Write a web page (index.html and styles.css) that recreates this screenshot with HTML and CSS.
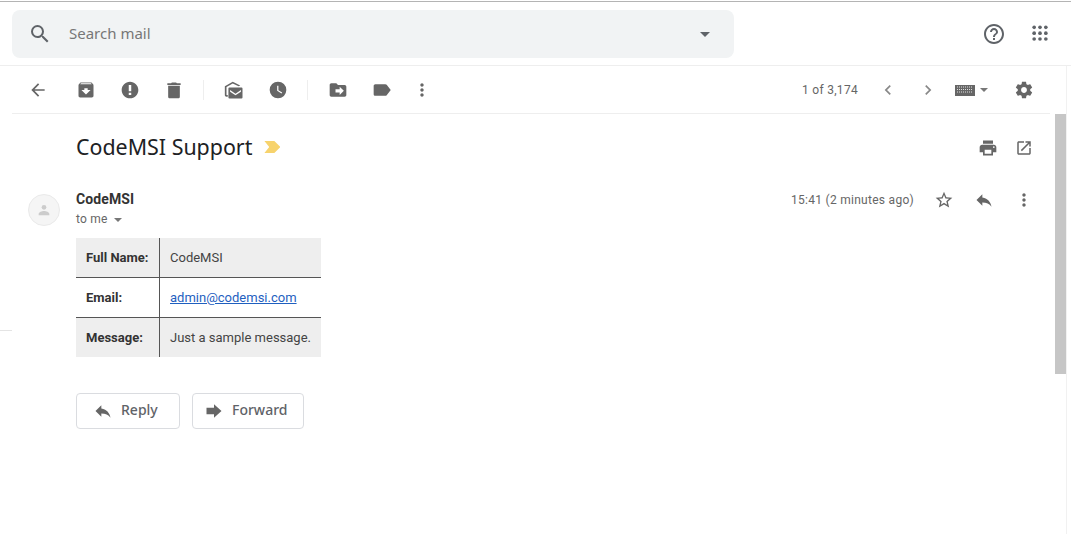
FILE: index.html
```html
<!DOCTYPE html>
<html lang="en">
<head>
<meta charset="utf-8">
<title>CodeMSI Support - Mail</title>
<link rel="stylesheet" href="styles.css">
</head>
<body>
<svg class="sprite" aria-hidden="true">
  <symbol id="i-search" viewBox="0 0 24 24"><path d="M15.5 14h-.79l-.28-.27A6.471 6.471 0 0 0 16 9.5 6.5 6.5 0 1 0 9.5 16c1.61 0 3.09-.59 4.23-1.57l.27.28v.79l5 4.99L20.49 19l-4.99-5zm-6 0C7.01 14 5 11.99 5 9.5S7.01 5 9.5 5 14 7.01 14 9.5 11.99 14 9.5 14z"/></symbol>
  <symbol id="i-help" viewBox="0 0 24 24"><path d="M11 18h2v-2h-2v2zm1-16C6.48 2 2 6.48 2 12s4.48 10 10 10 10-4.48 10-10S17.52 2 12 2zm0 18c-4.41 0-8-3.59-8-8s3.59-8 8-8 8 3.59 8 8-3.59 8-8 8zm0-14c-2.21 0-4 1.79-4 4h2c0-1.1.9-2 2-2s2 .9 2 2c0 2-3 1.75-3 5h2c0-2.25 3-2.5 3-5 0-2.21-1.79-4-4-4z"/></symbol>
  <symbol id="i-apps" viewBox="0 0 24 24"><circle cx="5" cy="4" r="2.200"/><circle cx="12" cy="4" r="2.200"/><circle cx="19" cy="4" r="2.200"/><circle cx="5" cy="11" r="2.200"/><circle cx="12" cy="11" r="2.200"/><circle cx="19" cy="11" r="2.200"/><circle cx="5" cy="18" r="2.200"/><circle cx="12" cy="18" r="2.200"/><circle cx="19" cy="18" r="2.200"/></symbol>
  <symbol id="i-back" viewBox="0 0 24 24"><path d="M20 11H7.83l5.59-5.59L12 4l-8 8 8 8 1.41-1.41L7.83 13H20v-2z"/></symbol>
  <symbol id="i-archive" viewBox="0 0 24 24"><path d="M20.54 5.23l-1.39-1.68C18.88 3.21 18.47 3 18 3H6c-.47 0-.88.21-1.16.55L3.46 5.23C3.17 5.57 3 6.02 3 6.5V19c0 1.1.9 2 2 2h14c1.1 0 2-.9 2-2V6.5c0-.48-.17-.93-.46-1.27zM12 17.5L6.5 12H10v-2h4v2h3.5L12 17.5zM5.12 5l.81-1h12l.94 1H5.12z"/></symbol>
  <symbol id="i-spam" viewBox="0 0 24 24"><path d="M12 2C6.48 2 2 6.48 2 12s4.48 10 10 10 10-4.48 10-10S17.52 2 12 2zm1.5 16h-3v-2.6h3V18zm0-4.6h-3V6h3v7.4z"/></symbol>
  <symbol id="i-delete" viewBox="0 0 24 24"><path d="M5 20c0 1.1.9 2 2 2h10c1.1 0 2-.9 2-2V7H5v13zM20 4h-4.5l-1-1h-5l-1 1H4v2h16V4z"/></symbol>
  <symbol id="i-mark" viewBox="0 0 24 24"><path d="M1 7.500 10.500 2 19.500 6.500 17.500 7.500 10.500 4.200 3 8.500V18H4.500v2H3c-1.200 0-2-.8-2-2z"/><path d="M6.500 9H21c.8 0 1.200.4 1.200 1.200V21c0 .8-.4 1.200-1.200 1.200H6.500c-.8 0-1.200-.4-1.200-1.200V10.200c0-.8.4-1.200 1.200-1.200zm.8 3 6.500 4.400L20.300 12v2L13.800 18.400 7.300 14z" fill-rule="evenodd"/></symbol>
  <symbol id="i-clock" viewBox="0 0 24 24"><path d="M12 2a10 10 0 1 0 0 20 10 10 0 0 0 0-20zm4.200 14.200L11 13V7h1.500v5.200l4.500 2.700z" fill-rule="evenodd"/></symbol>
  <symbol id="i-move" viewBox="0 0 24 24"><path d="M20 6h-8l-2-2H4c-1.100 0-2 .9-2 2v12c0 1.100.9 2 2 2h16c1.100 0 2-.9 2-2V8c0-1.100-.9-2-2-2zm-6 12v-3H9v-4h5V8l5 5-5 5z"/></symbol>
  <symbol id="i-label" viewBox="0 0 24 24"><path d="M17.630 5.840C17.270 5.330 16.670 5 16 5L4 5.010C2.900 5.010 2 5.900 2 7v10c0 1.100.9 1.990 2 1.990L16 19c.67 0 1.270-.33 1.630-.84L22.500 12l-4.870-6.160z"/></symbol>
  <symbol id="i-more" viewBox="0 0 24 24"><path d="M12 8c1.100 0 2-.9 2-2s-.9-2-2-2-2 .9-2 2 .9 2 2 2zm0 2c-1.100 0-2 .9-2 2s.9 2 2 2 2-.9 2-2-.9-2-2-2zm0 6c-1.100 0-2 .9-2 2s.9 2 2 2 2-.9 2-2-.9-2-2-2z"/></symbol>
  <symbol id="i-left" viewBox="0 0 24 24"><path d="M15.410 7.410L14 6l-6 6 6 6 1.410-1.410L10.830 12z"/></symbol>
  <symbol id="i-right" viewBox="0 0 24 24"><path d="M10 6L8.590 7.410 13.170 12l-4.580 4.590L10 18l6-6z"/></symbol>
  <symbol id="i-keyboard" viewBox="0 0 20 12"><path d="M0 1h20v11H0z"/><path d="M2 3h16M2 5.500h16M2 8h16" stroke="#ddd" stroke-width="1" stroke-dasharray="1 1"/></symbol>
  <symbol id="i-gear" viewBox="0 0 24 24"><path d="M19.430 12.980c.04-.32.07-.64.07-.98s-.03-.66-.07-.98l2.110-1.650c.19-.15.24-.42.12-.64l-2-3.460c-.12-.22-.39-.3-.61-.22l-2.490 1c-.52-.4-1.080-.73-1.690-.98l-.38-2.650C14.460 2.180 14.250 2 14 2h-4c-.25 0-.46.18-.49.42l-.38 2.650c-.61.25-1.170.59-1.690.98l-2.490-1c-.23-.09-.49 0-.61.22l-2 3.460c-.13.22-.07.49.12.64l2.110 1.650c-.04.32-.07.65-.07.98s.03.66.07.98l-2.110 1.650c-.19.15-.24.42-.12.64l2 3.460c.12.22.39.3.61.22l2.490-1c.52.4 1.080.73 1.690.98l.38 2.650c.03.24.24.42.49.42h4c.25 0 .46-.18.49-.42l.38-2.650c.61-.25 1.170-.59 1.690-.98l2.490 1c.23.09.49 0 .61-.22l2-3.460c.12-.22.07-.49-.12-.64l-2.110-1.650zM12 15.500c-1.930 0-3.500-1.570-3.500-3.500s1.570-3.500 3.500-3.500 3.500 1.570 3.500 3.500-1.570 3.500-3.500 3.500z"/></symbol>
  <symbol id="i-print" viewBox="0 0 24 24"><path d="M19 8H5c-1.660 0-3 1.340-3 3v6h4v4h12v-4h4v-6c0-1.660-1.340-3-3-3zm-3 11H8v-5h8v5zm3-7c-.55 0-1-.45-1-1s.45-1 1-1 1 .45 1 1-.45 1-1 1zm-1-9H6v4h12V3z"/></symbol>
  <symbol id="i-open" viewBox="0 0 24 24"><path d="M19 19H5V5h7V3H5c-1.110 0-2 .9-2 2v14c0 1.100.89 2 2 2h14c1.100 0 2-.9 2-2v-7h-2v7zM14 3v2h3.590l-9.830 9.830 1.410 1.410L19 6.410V10h2V3h-7z"/></symbol>
  <symbol id="i-star" viewBox="0 0 24 24"><path d="M22 9.240l-7.190-.62L12 2 9.190 8.630 2 9.240l5.460 4.730L5.820 21 12 17.270 18.180 21l-1.630-7.030L22 9.240zM12 15.400l-3.760 2.270 1-4.280-3.320-2.880 4.380-.38L12 6.100l1.710 4.040 4.380.38-3.320 2.880 1 4.280L12 15.400z"/></symbol>
  <symbol id="i-reply" viewBox="0 0 24 24"><path d="M10 9V5l-7 7 7 7v-4.100c5 0 8.500 1.600 11 5.100-1-5-4-10-11-11z"/></symbol>
  <symbol id="i-forward" viewBox="0 0 24 24"><path d="M12 8V4l9 8-9 8v-4H3V8z"/></symbol>
  <symbol id="i-person" viewBox="0 0 24 24"><circle cx="12" cy="8" r="3.500"/><path d="M4 20v-2c0-3 5-4.500 8-4.500s8 1.500 8 4.500v2z"/></symbol>
</svg>

<header class="topbar">
  <div class="search">
    <svg class="icon search-icon"><use href="#i-search"/></svg>
    <span class="search-text">Search mail</span>
    <span class="caret search-caret"></span>
  </div>
  <div class="top-actions">
    <button class="btn btn-44"><svg class="icon icon-24"><use href="#i-help"/></svg></button>
    <button class="btn btn-48"><svg class="icon icon-apps"><use href="#i-apps"/></svg></button>
  </div>
</header>

<div class="frame">
  <nav class="toolbar">
    <button class="btn btn-44 back"><svg class="icon"><use href="#i-back"/></svg></button>
    <button class="btn btn-44"><svg class="icon"><use href="#i-archive"/></svg></button>
    <button class="btn btn-44"><svg class="icon"><use href="#i-spam"/></svg></button>
    <button class="btn btn-44"><svg class="icon"><use href="#i-delete"/></svg></button>
    <span class="divider"></span>
    <button class="btn btn-44"><svg class="icon"><use href="#i-mark"/></svg></button>
    <button class="btn btn-44"><svg class="icon"><use href="#i-clock"/></svg></button>
    <span class="divider"></span>
    <button class="btn btn-44"><svg class="icon"><use href="#i-move"/></svg></button>
    <button class="btn btn-44"><svg class="icon"><use href="#i-label"/></svg></button>
    <button class="btn btn-36"><svg class="icon"><use href="#i-more"/></svg></button>
    <span class="pager">1 of 3,174</span>
    <button class="btn btn-40"><svg class="icon icon-light"><use href="#i-left"/></svg></button>
    <button class="btn btn-40"><svg class="icon icon-light"><use href="#i-right"/></svg></button>
    <div class="kbd">
      <svg class="icon-kbd"><use href="#i-keyboard"/></svg>
      <span class="caret caret-small"></span>
    </div>
    <button class="btn btn-44"><svg class="icon"><use href="#i-gear"/></svg></button>
  </nav>

  <div class="pane">
    <main class="mail">
      <div class="subject-row">
        <h1 class="subject">CodeMSI Support</h1>
        <span class="marker"></span>
        <div class="subject-actions">
          <button class="btn btn-36"><svg class="icon"><use href="#i-print"/></svg></button>
          <button class="btn btn-36"><svg class="icon icon-open"><use href="#i-open"/></svg></button>
        </div>
      </div>

      <div class="message">
        <div class="avatar"><svg class="avatar-icon"><use href="#i-person"/></svg></div>
        <div class="message-main">
          <div class="message-head">
            <div class="message-who">
              <div class="sender">CodeMSI</div>
              <div class="to">to me <span class="caret caret-tiny"></span></div>
            </div>
            <div class="message-meta">
              <span class="time">15:41 (2 minutes ago)</span>
              <button class="btn btn-40"><svg class="icon"><use href="#i-star"/></svg></button>
              <button class="btn btn-40"><svg class="icon"><use href="#i-reply"/></svg></button>
              <button class="btn btn-40"><svg class="icon"><use href="#i-more"/></svg></button>
            </div>
          </div>

          <table class="data">
            <tr class="shaded"><th>Full Name:</th><td>CodeMSI</td></tr>
            <tr><th>Email:</th><td><a href="#">admin@codemsi.com</a></td></tr>
            <tr class="shaded"><th>Message:</th><td>Just a sample message.</td></tr>
          </table>

          <div class="actions">
            <button class="action action-reply"><svg class="icon"><use href="#i-reply"/></svg><span class="action-label">Reply</span></button>
            <button class="action action-forward"><svg class="icon"><use href="#i-forward"/></svg><span class="action-label">Forward</span></button>
          </div>
        </div>
      </div>
    </main>
    <div class="scrolltrack"><div class="scrollthumb"></div></div>
  </div>
</div>
<span class="edge-mark"></span>
</body>
</html>
```
FILE: styles.css
```css
* { box-sizing: border-box; }
html, body { height: 100%; }
body {
  margin: 0;
  overflow: hidden;
  background: #fff;
  color: #222;
  font-family: Roboto, "Liberation Sans", sans-serif;
  border-top: 1px solid #fff;
}
.sprite { display: none; }

.btn {
  flex: none;
  height: 40px;
  padding: 0;
  border: 0;
  background: none;
  display: flex;
  align-items: center;
  justify-content: center;
}
.btn-36 { width: 36px; }
.btn-40 { width: 40px; }
.btn-44 { width: 44px; }
.btn-48 { width: 48px; }
.icon { width: 20px; height: 20px; fill: #666; display: block; }
.icon-24 { width: 24px; height: 24px; fill: #5f6368; }
.icon-apps { width: 20px; height: 20px; fill: #5f6368; }
.icon-light { fill: #888; }
.icon-open { width: 18px; height: 18px; }

.topbar {
  height: 65px;
  display: flex;
  align-items: flex-start;
  padding: 8px 7px 0 12px;
  border-top: 1px solid #b4b4b4;
  border-bottom: 1px solid #eee;
}
.search {
  width: 722px;
  height: 48px;
  background: #f1f3f4;
  border-radius: 8px;
  display: flex;
  align-items: center;
  padding: 0 24px 0 16px;
}
.search-icon { width: 24px; height: 24px; fill: #5f6368; }
.search-text {
  margin: 0 0 2px 17px;
  font-family: "Noto Sans", sans-serif;
  font-size: 15px;
  color: #777;
}
.search-caret { margin-left: auto; }
.top-actions {
  margin-left: auto;
  display: flex;
  align-items: center;
  height: 48px;
}

.caret {
  width: 0;
  height: 0;
  display: inline-block;
  border-style: solid;
  border-color: #5f6368 transparent transparent;
  border-width: 5px 5px 0;
}
.caret-small { border-top-color: #777; border-width: 4px 4px 0; }
.caret-tiny { border-top-color: #777; border-width: 4px 4px 0; margin-left: 3px; vertical-align: 1px; }

.frame {
  width: 1067px;
  height: 468px;
  border-right: 1px solid #f1f1f1;
  display: flex;
  flex-direction: column;
}
.toolbar {
  flex: none;
  height: 47px;
  margin-left: 12px;
  padding-right: 20px;
  display: flex;
  align-items: center;
}
.toolbar > .back { margin-left: 4px; margin-right: 4px; }
.divider {
  flex: none;
  width: 1px;
  height: 20px;
  margin: 0 8px 0 7px;
  background: #eee;
}
.pager {
  margin-left: auto;
  margin-right: 10px;
  font-size: 12px;
  letter-spacing: .3px;
  color: #666;
}
.kbd {
  flex: none;
  width: 54px;
  padding-left: 7px;
  display: flex;
  align-items: center;
  gap: 5px;
}
.icon-kbd { width: 20px; height: 12px; fill: #666; display: block; }

.pane {
  flex: 1;
  min-height: 0;
  display: flex;
}
.mail {
  flex: 1;
  min-width: 0;
  margin: 0 16px 0 12px;
  border-top: 1px solid #eee;
}
.scrolltrack {
  flex: none;
  width: 11px;
  margin: 1px 0 0 -11px;
  background: #fff;
}
.scrollthumb {
  width: 11px;
  height: 260px;
  background: #c6c6c6;
}
.subject-row {
  height: 66px;
  display: flex;
  align-items: center;
  padding-left: 64px;
}
.subject {
  margin: 0 0 2px;
  font-family: "Noto Sans", sans-serif;
  font-size: 21.400px;
  font-weight: 400;
  color: #202124;
}
.marker {
  width: 16px;
  height: 12px;
  margin-left: 12px;
  background: #f7d36d;
  clip-path: polygon(0 0, 62% 0, 100% 50%, 62% 100%, 0 100%, 30% 50%);
}
.subject-actions {
  margin: 2px 8px 0 auto;
  display: flex;
}
.message {
  display: flex;
  padding-left: 16px;
}
.avatar {
  flex: none;
  width: 32px;
  height: 32px;
  margin-top: 14px;
  border-radius: 50%;
  background: #f5f5f5;
  border: 1px solid #eaeaea;
  display: flex;
  align-items: center;
  justify-content: center;
}
.avatar-icon { width: 16px; height: 16px; fill: #ccc; }
.message-main { flex: 1; margin: 0 6px 0 16px; }
.message-head { display: flex; justify-content: space-between; height: 58px; }
.message-who { padding-top: 9px; }
.sender { font-size: 14px; font-weight: 700; color: #333; line-height: 20px; letter-spacing: .1px; }
.to { font-size: 12px; color: #666; line-height: 20px; letter-spacing: .2px; }
.message-meta {
  display: flex;
  align-items: center;
  height: 40px;
}
.time { font-size: 12px; letter-spacing: .28px; color: #666; margin-right: 10px; }

.data {
  border-collapse: separate;
  border-spacing: 0;
  font-size: 13px;
  color: #444;
}
.data th, .data td {
  height: 40px;
  padding: 0 10px;
  text-align: left;
  border-bottom: 1px solid #555;
}
.data th { border-right: 1px solid #555; font-weight: 700; color: #333; width: 84px; white-space: nowrap; }
.data tr:last-child th, .data tr:last-child td { border-bottom: 0; height: 39px; }
.shaded th, .shaded td { background: #eee; }
.data a { color: #1f5fbf; }

.actions {
  display: flex;
  gap: 12px;
  margin-top: 36px;
}
.action {
  height: 36px;
  display: flex;
  align-items: center;
  gap: 8px;
  background: #fff;
  border: 1px solid #dadce0;
  border-radius: 4px;
  font-family: "Noto Sans", sans-serif;
  font-size: 14px;
  font-weight: 500;
  color: #5f6368;
  padding: 0;
}
.action-label { margin-bottom: 3px; }
.action-reply { width: 104px; padding-left: 16px; }
.action-forward { width: 112px; padding-left: 11px; }

.edge-mark {
  position: absolute;
  left: 0;
  top: 330px;
  width: 12px;
  height: 1px;
  background: #e4e4e4;
}
```
